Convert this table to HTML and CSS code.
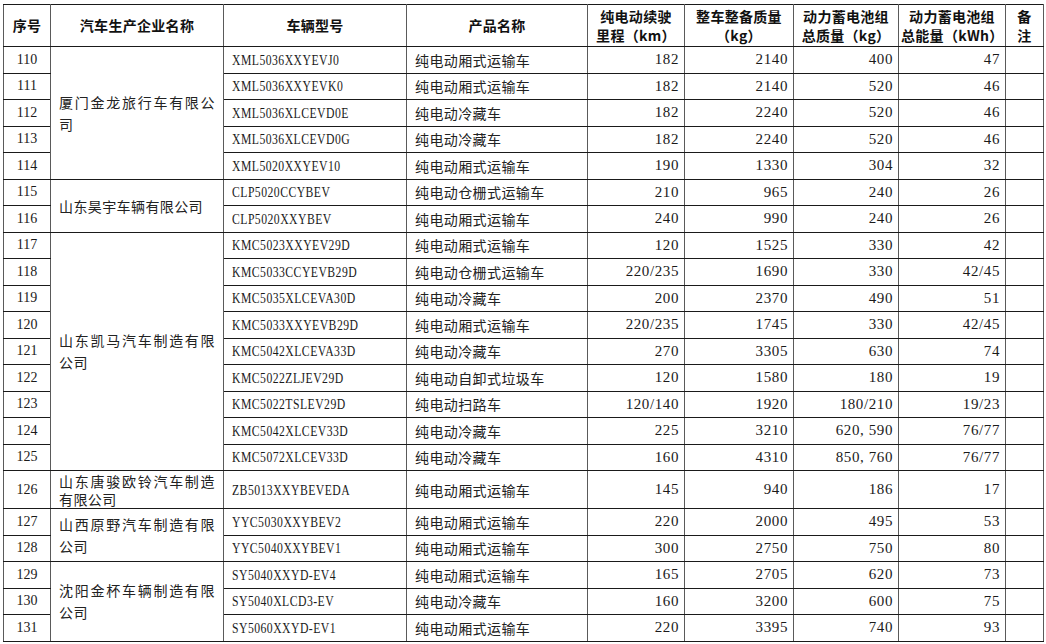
FILE: index.html
```html
<!DOCTYPE html>
<html lang="zh-CN">
<head>
<meta charset="utf-8">
<title>新能源汽车车型目录</title>
<link rel="stylesheet" href="styles.css">
</head>
<body>
<table class="grid">
  <colgroup>
    <col class="w-seq"><col class="w-co"><col class="w-model"><col class="w-name">
    <col class="w-range"><col class="w-mass"><col class="w-bmass"><col class="w-energy"><col class="w-note">
  </colgroup>
  <thead>
    <tr class="head">
      <th>序号</th>
      <th>汽车生产企业名称</th>
      <th>车辆型号</th>
      <th>产品名称</th>
      <th>纯电动续驶<br>里程（km）</th>
      <th>整车整备质量<br>（kg）</th>
      <th>动力蓄电池组<br>总质量（kg）</th>
      <th>动力蓄电池组<br>总能量（kWh）</th>
      <th>备<br>注</th>
    </tr>
  </thead>
  <tbody>
    <tr><td class="seq">110</td><td class="co" rowspan="5">厦门金龙旅行车有限公司</td><td class="model"><span class="code">XML5036XXYEVJ0</span></td><td class="name">纯电动厢式运输车</td><td class="num">182</td><td class="num">2140</td><td class="num">400</td><td class="num">47</td><td></td></tr>
    <tr><td class="seq">111</td><td class="model"><span class="code">XML5036XXYEVK0</span></td><td class="name">纯电动厢式运输车</td><td class="num">182</td><td class="num">2140</td><td class="num">520</td><td class="num">46</td><td></td></tr>
    <tr><td class="seq">112</td><td class="model"><span class="code">XML5036XLCEVD0E</span></td><td class="name">纯电动冷藏车</td><td class="num">182</td><td class="num">2240</td><td class="num">520</td><td class="num">46</td><td></td></tr>
    <tr><td class="seq">113</td><td class="model"><span class="code">XML5036XLCEVD0G</span></td><td class="name">纯电动冷藏车</td><td class="num">182</td><td class="num">2240</td><td class="num">520</td><td class="num">46</td><td></td></tr>
    <tr><td class="seq">114</td><td class="model"><span class="code">XML5020XXYEV10</span></td><td class="name">纯电动厢式运输车</td><td class="num">190</td><td class="num">1330</td><td class="num">304</td><td class="num">32</td><td></td></tr>
    <tr><td class="seq">115</td><td class="co" rowspan="2">山东昊宇车辆有限公司</td><td class="model"><span class="code">CLP5020CCYBEV</span></td><td class="name">纯电动仓栅式运输车</td><td class="num">210</td><td class="num">965</td><td class="num">240</td><td class="num">26</td><td></td></tr>
    <tr><td class="seq">116</td><td class="model"><span class="code">CLP5020XXYBEV</span></td><td class="name">纯电动厢式运输车</td><td class="num">240</td><td class="num">990</td><td class="num">240</td><td class="num">26</td><td></td></tr>
    <tr><td class="seq">117</td><td class="co" rowspan="9">山东凯马汽车制造有限公司</td><td class="model"><span class="code">KMC5023XXYEV29D</span></td><td class="name">纯电动厢式运输车</td><td class="num">120</td><td class="num">1525</td><td class="num">330</td><td class="num">42</td><td></td></tr>
    <tr><td class="seq">118</td><td class="model"><span class="code">KMC5033CCYEVB29D</span></td><td class="name">纯电动仓栅式运输车</td><td class="num">220/235</td><td class="num">1690</td><td class="num">330</td><td class="num">42/45</td><td></td></tr>
    <tr><td class="seq">119</td><td class="model"><span class="code">KMC5035XLCEVA30D</span></td><td class="name">纯电动冷藏车</td><td class="num">200</td><td class="num">2370</td><td class="num">490</td><td class="num">51</td><td></td></tr>
    <tr><td class="seq">120</td><td class="model"><span class="code">KMC5033XXYEVB29D</span></td><td class="name">纯电动厢式运输车</td><td class="num">220/235</td><td class="num">1745</td><td class="num">330</td><td class="num">42/45</td><td></td></tr>
    <tr><td class="seq">121</td><td class="model"><span class="code">KMC5042XLCEVA33D</span></td><td class="name">纯电动冷藏车</td><td class="num">270</td><td class="num">3305</td><td class="num">630</td><td class="num">74</td><td></td></tr>
    <tr><td class="seq">122</td><td class="model"><span class="code">KMC5022ZLJEV29D</span></td><td class="name">纯电动自卸式垃圾车</td><td class="num">120</td><td class="num">1580</td><td class="num">180</td><td class="num">19</td><td></td></tr>
    <tr><td class="seq">123</td><td class="model"><span class="code">KMC5022TSLEV29D</span></td><td class="name">纯电动扫路车</td><td class="num">120/140</td><td class="num">1920</td><td class="num">180/210</td><td class="num">19/23</td><td></td></tr>
    <tr><td class="seq">124</td><td class="model"><span class="code">KMC5042XLCEV33D</span></td><td class="name">纯电动冷藏车</td><td class="num">225</td><td class="num">3210</td><td class="num">620, 590</td><td class="num">76/77</td><td></td></tr>
    <tr><td class="seq">125</td><td class="model"><span class="code">KMC5072XLCEV33D</span></td><td class="name">纯电动冷藏车</td><td class="num">160</td><td class="num">4310</td><td class="num">850, 760</td><td class="num">76/77</td><td></td></tr>
    <tr class="tall"><td class="seq">126</td><td class="co tight">山东唐骏欧铃汽车制造有限公司</td><td class="model"><span class="code">ZB5013XXYBEVEDA</span></td><td class="name">纯电动厢式运输车</td><td class="num">145</td><td class="num">940</td><td class="num">186</td><td class="num">17</td><td></td></tr>
    <tr><td class="seq">127</td><td class="co" rowspan="2">山西原野汽车制造有限公司</td><td class="model"><span class="code">YYC5030XXYBEV2</span></td><td class="name">纯电动厢式运输车</td><td class="num">220</td><td class="num">2000</td><td class="num">495</td><td class="num">53</td><td></td></tr>
    <tr><td class="seq">128</td><td class="model"><span class="code">YYC5040XXYBEV1</span></td><td class="name">纯电动厢式运输车</td><td class="num">300</td><td class="num">2750</td><td class="num">750</td><td class="num">80</td><td></td></tr>
    <tr><td class="seq">129</td><td class="co" rowspan="3">沈阳金杯车辆制造有限公司</td><td class="model"><span class="code">SY5040XXYD-EV4</span></td><td class="name">纯电动厢式运输车</td><td class="num">165</td><td class="num">2705</td><td class="num">620</td><td class="num">73</td><td></td></tr>
    <tr><td class="seq">130</td><td class="model"><span class="code">SY5040XLCD3-EV</span></td><td class="name">纯电动冷藏车</td><td class="num">160</td><td class="num">3200</td><td class="num">600</td><td class="num">75</td><td></td></tr>
    <tr><td class="seq">131</td><td class="model"><span class="code">SY5060XXYD-EV1</span></td><td class="name">纯电动厢式运输车</td><td class="num">220</td><td class="num">3395</td><td class="num">740</td><td class="num">93</td><td></td></tr>
  </tbody>
</table>
</body>
</html>
```

FILE: styles.css
```css
html, body {
  background: #ffffff;
}

body {
  margin: 4px 0 0 3px;
  font-family: "Liberation Serif", "Noto Sans CJK SC", serif;
  color: #1a1a1a;
}

.grid {
  border-collapse: collapse;
  table-layout: fixed;
  width: 1040px;
  border: 1px solid #222;
}

.w-seq { width: 47px; }
.w-co { width: 173px; }
.w-model { width: 183px; }
.w-name { width: 181px; }
.w-range { width: 97px; }
.w-mass { width: 109px; }
.w-bmass { width: 105px; }
.w-energy { width: 107px; }
.w-note { width: 38px; }

.grid th,
.grid td {
  border-top: 1px solid #1a1a1a;
  border-bottom: 1px solid #1a1a1a;
  border-left: 1px solid #5a5a5a;
  border-right: 1px solid #5a5a5a;
  padding: 0 6px;
  vertical-align: middle;
  overflow: hidden;
  white-space: nowrap;
}

.head th {
  height: 41px;
  font-family: "Noto Sans CJK SC", sans-serif;
  font-weight: 700;
  font-size: 14px;
  line-height: 19px;
  letter-spacing: 0.3px;
  color: #111;
  text-align: center;
  padding: 0 2px;
}

.grid td {
  height: 25.5px;
}

.tall td {
  height: 37px;
}

.seq {
  text-align: center;
  font-size: 14px;
}

.co {
  font-family: "Noto Sans CJK SC", sans-serif;
  font-size: 14px;
  letter-spacing: 0.4px;
  line-height: 22px;
  white-space: normal !important;
  text-align: justify;
  padding: 0 8px !important;
  color: #222;
}

.co.tight {
  line-height: 18px;
}

.model {
  padding: 0 8px !important;
}

.code {
  display: inline-block;
  font-size: 15px;
  letter-spacing: 0.6px;
  transform: scaleX(0.78);
  transform-origin: left center;
}

.name {
  font-family: "Noto Sans CJK SC", sans-serif;
  font-size: 14px;
  letter-spacing: 0.4px;
  padding: 0 8px !important;
  color: #222;
}

.num {
  text-align: right;
  font-size: 15px;
  letter-spacing: 0.6px;
  padding: 0 5px 0 4px !important;
}
```
